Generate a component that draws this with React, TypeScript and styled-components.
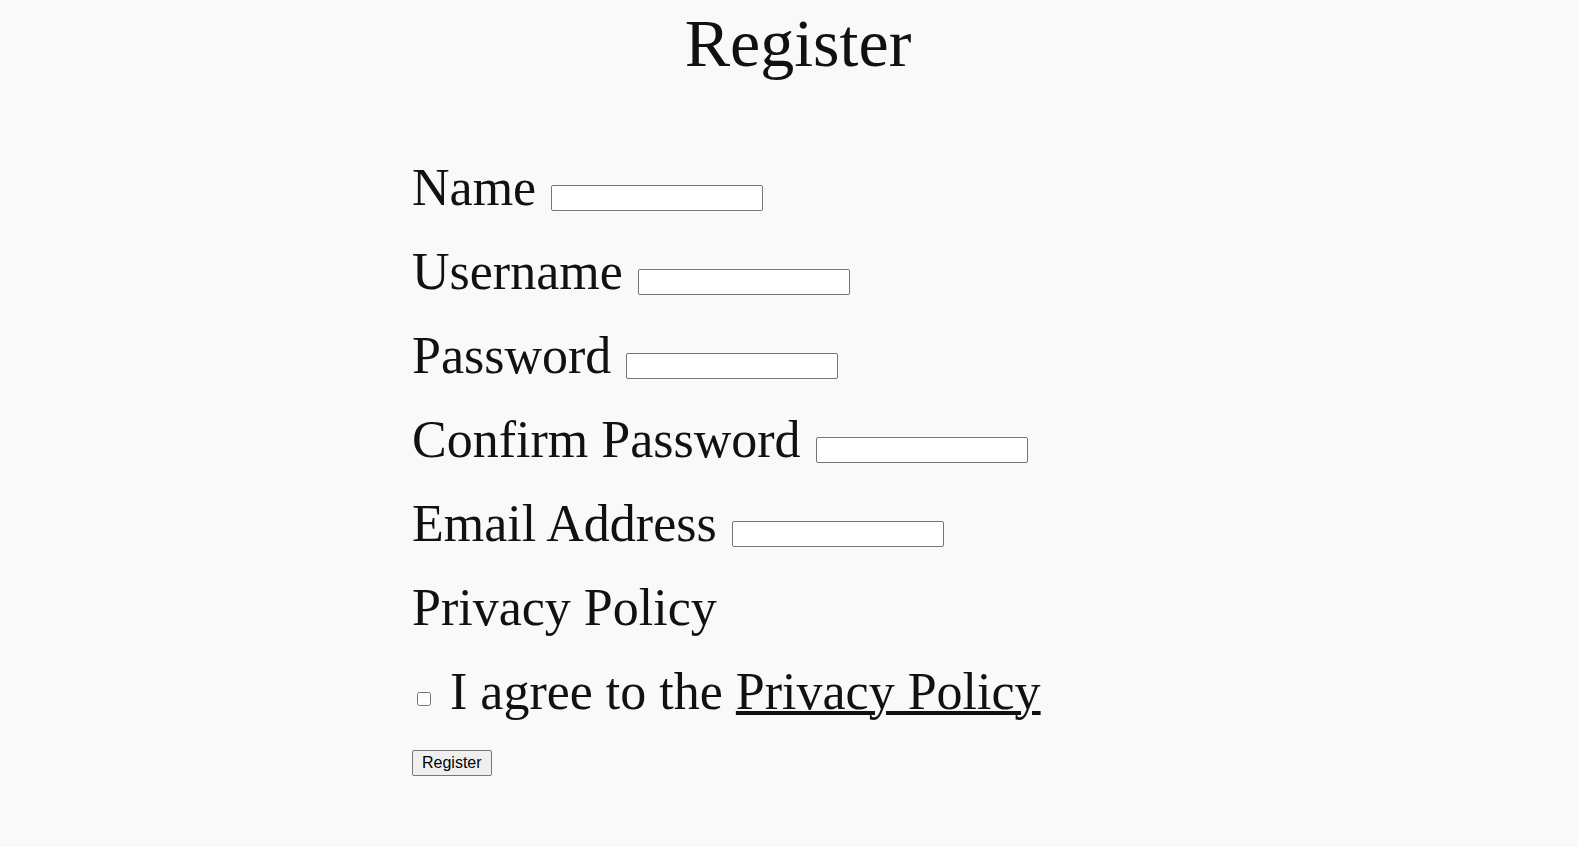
import React from "react";
import styled, { createGlobalStyle } from "styled-components";

const GlobalStyle = createGlobalStyle`
  html, body {
    margin: 0;
    padding: 0;
    background: #f9f9f9;
  }
  body {
    font-family: "Liberation Serif", "Times New Roman", serif;
    color: #111111;
  }
`;

const Page = styled.main`
  padding-top: 1px;
`;

const Title = styled.h1`
  margin: 0;
  padding-left: 18px;
  font-size: 68px;
  line-height: 84px;
  font-weight: 400;
  text-align: center;
`;

const Form = styled.form`
  width: 754px;
  margin: 61px auto 0;
`;

const Row = styled.div`
  font-size: 52px;
  line-height: 84px;
  white-space: nowrap;
`;

const TextInput = styled.input`
  box-sizing: border-box;
  width: 212px;
  height: 26px;
  margin: 0 0 0 2px;
  padding: 1px 2px;
  border: 1px solid #767676;
  border-radius: 2px;
  background: #ffffff;
  font-family: Arial, "Liberation Sans", sans-serif;
  font-size: 16px;
  vertical-align: 2px;
`;

const Check = styled.input`
  width: 14px;
  height: 14px;
  margin: 3px 6px 3px 5px;
  vertical-align: 3px;
`;

const PolicyLink = styled.a`
  color: #111111;
  text-decoration: underline;
  text-decoration-thickness: 4px;
  text-underline-offset: 2px;
`;

const SubmitButton = styled.button`
  box-sizing: border-box;
  margin-top: 16px;
  height: 26px;
  padding: 2px 9px;
  border: 1px solid #767676;
  border-radius: 2px;
  background: #efefef;
  color: #000000;
  font-family: Arial, "Liberation Sans", sans-serif;
  font-size: 16px;
  line-height: 18px;
`;

const fields = [
  { label: "Name", type: "text" },
  { label: "Username", type: "text" },
  { label: "Password", type: "password" },
  { label: "Confirm Password", type: "password" },
  { label: "Email Address", type: "email" },
];

export default function App() {
  return (
    <>
      <GlobalStyle />
      <Page>
        <Title>Register</Title>
        <Form onSubmit={(e) => e.preventDefault()}>
          {fields.map((f) => (
            <Row key={f.label}>
              <label>
                {f.label} <TextInput type={f.type} />
              </label>
            </Row>
          ))}
          <Row>Privacy Policy</Row>
          <Row>
            <label>
              <Check type="checkbox" /> I agree to the{" "}
              <PolicyLink href="#">Privacy Policy</PolicyLink>
            </label>
          </Row>
          <SubmitButton type="submit">Register</SubmitButton>
        </Form>
      </Page>
    </>
  );
}
